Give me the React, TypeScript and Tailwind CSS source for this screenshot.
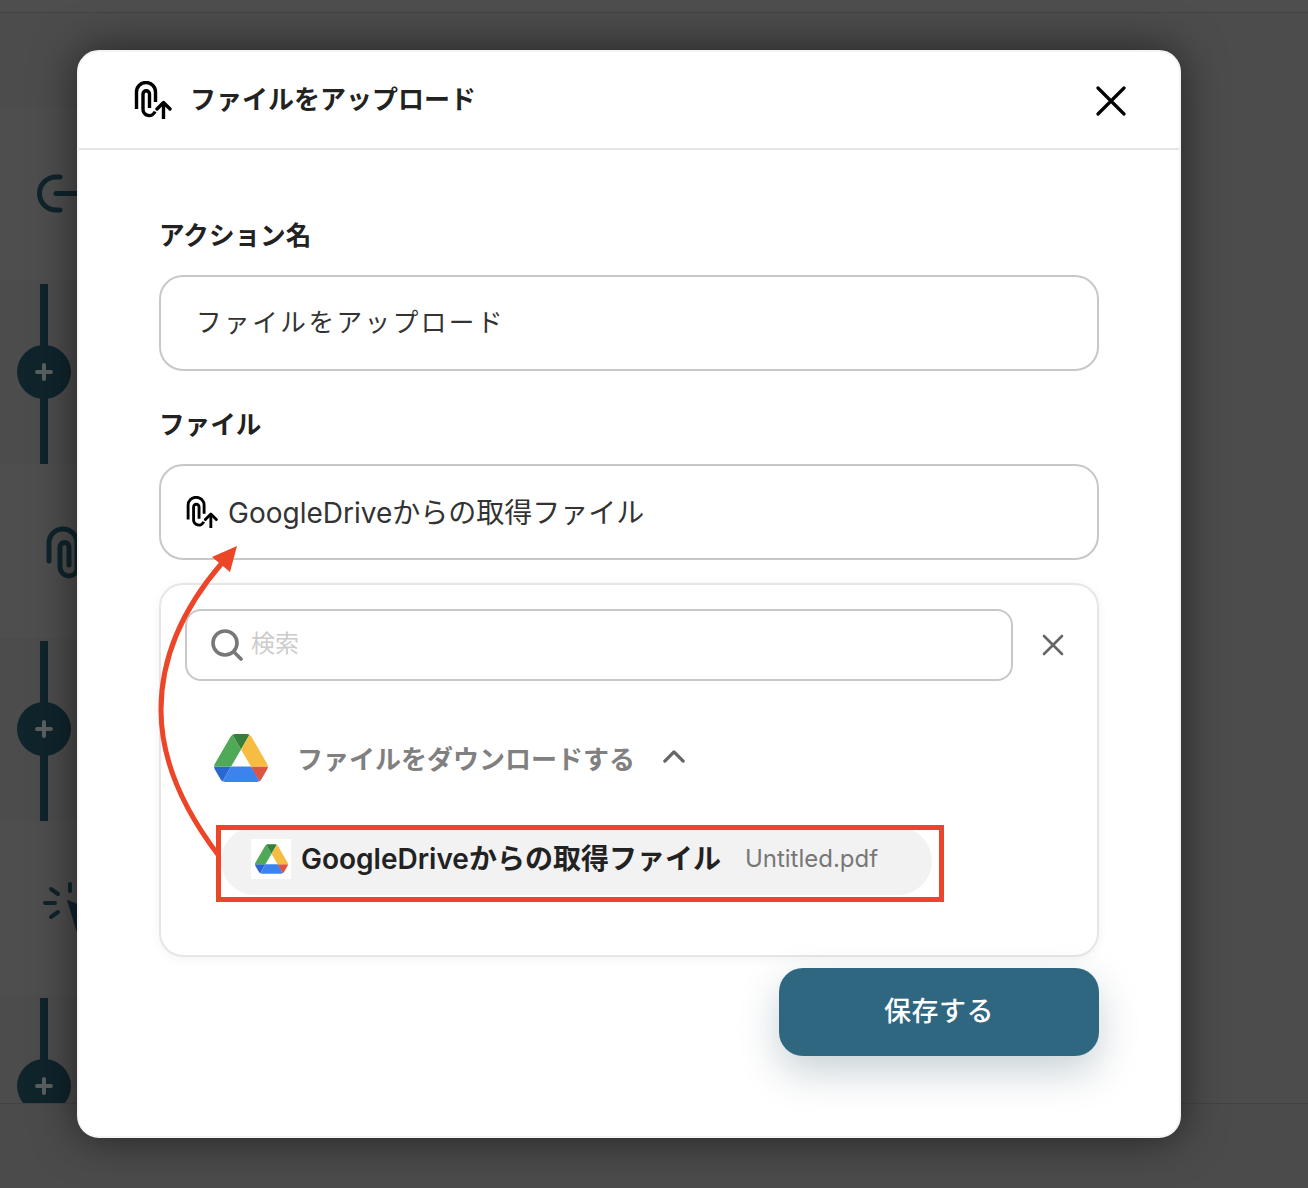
function ClipUpload({ className }: { className?: string }) {
  return (
    <svg viewBox="0 0 38 38" fill="none" stroke="currentColor" strokeWidth="3.4" strokeLinecap="round" strokeLinejoin="round" className={className}>
      <path strokeLinecap="butt" d="M2.5 28V11a9.5 9.5 0 0 1 19 0v10" />
      <path strokeLinecap="butt" d="M15.5 27V13a3.2 3.2 0 0 0-6.5 0v15a6.2 6.2 0 0 0 12 2.5" />
      <path strokeLinecap="butt" d="M29.5 38V23" />
      <path d="M23 28l6.5-6.5 6.5 6.5" />
    </svg>
  );
}

function DriveLogo({ className }: { className?: string }) {
  return (
    <svg viewBox="0 0 87.3 78" className={className}>
      <path d="m6.6 66.85 3.85 6.65c.8 1.4 1.95 2.5 3.3 3.3l13.75-23.8h-27.5c0 1.55.4 3.1 1.2 4.5z" fill="#2a66cf" />
      <path d="m43.65 25-13.75-23.8c-1.35.8-2.5 1.9-3.3 3.3l-25.4 44a9.06 9.06 0 0 0-1.2 4.5h27.5z" fill="#4fa957" />
      <path d="m73.55 76.8c1.35-.8 2.5-1.9 3.3-3.3l1.6-2.75 7.65-13.25c.8-1.4 1.2-2.95 1.2-4.5h-27.502l5.852 11.5z" fill="#dd5443" />
      <path d="m43.65 25 13.75-23.8c-1.35-.8-2.9-1.2-4.5-1.2h-18.5c-1.6 0-3.15.45-4.5 1.2z" fill="#34803a" />
      <path d="m59.8 53h-32.3l-13.75 23.8c1.35.8 2.9 1.2 4.5 1.2h50.8c1.6 0 3.15-.45 4.5-1.2z" fill="#3d83f0" />
      <path d="m73.4 26.5-12.7-22c-.8-1.4-1.95-2.5-3.3-3.3l-13.75 23.8 16.15 28h27.45c0-1.55-.4-3.1-1.2-4.5z" fill="#f5bd42" />
    </svg>
  );
}

function Connector() {
  return (
    <div className="relative h-[180px] w-[88px] shrink-0 flex justify-center items-center">
      <div className="absolute inset-y-0 w-2 bg-[#10242c]" />
      <div className="relative mb-[4px] w-[54px] h-[54px] rounded-full bg-[#10242c] flex items-center justify-center">
        <svg viewBox="0 0 20 20" className="w-5 h-5" stroke="#5a5f60" strokeWidth="4" strokeLinecap="round">
          <path d="M10 3v14M3 10h14" />
        </svg>
      </div>
    </div>
  );
}

function BackgroundCard({ children }: { children: React.ReactNode }) {
  return <div className="h-[174px] w-[300px] shrink-0 -ml-[20px] pl-[56px] rounded-[24px] bg-[#4e4e4e] flex items-center">{children}</div>;
}

export default function App() {
  return (
    <div className="relative h-[1188px] w-full overflow-hidden bg-[#4b4c4b] flex flex-col font-['Inter','Noto_Sans_CJK_JP',sans-serif]">
      {/* Page behind the dialog */}
      <div className="h-[13px] shrink-0 bg-[#4e4e4e] border-b border-[#434343]" />
      <div className="flex-1 min-h-0 overflow-hidden pt-[94px] flex flex-col">
        <BackgroundCard>
          <svg viewBox="0 0 44 40" fill="none" stroke="#10242c" strokeWidth="5" strokeLinecap="round" className="w-[44px] h-[40px]">
            <path d="M24 3h-4a16.5 16.5 0 0 0 0 33h4M20 19.5h24" />
          </svg>
        </BackgroundCard>
        <div className="h-[3px] shrink-0" />
        <Connector />
        <BackgroundCard>
          <svg viewBox="0 0 44 60" fill="none" stroke="#10242c" strokeWidth="5" strokeLinecap="round" className="w-[44px] h-[60px] ml-[10px] mt-[4px]">
            <path d="M3 38V20a14 14 0 0 1 28 0v28" />
            <path d="M23 42V24a4 4 0 0 0-9 0v20a9 9 0 0 0 17 4" />
          </svg>
        </BackgroundCard>
        <div className="h-[3px] shrink-0" />
        <Connector />
        <BackgroundCard>
          <svg viewBox="0 0 50 60" fill="none" stroke="#10242c" strokeWidth="4" strokeLinecap="round" className="w-[50px] h-[60px] ml-[7px] mt-[6px]">
            <path d="M27 3v7M2 22h10M8 8l7 5M8 36l7-5" />
            <path fill="#10242c" d="M27 22l20 8-8 5-5 10z" />
          </svg>
        </BackgroundCard>
        <div className="h-[3px] shrink-0" />
        <Connector />
      </div>
      <div className="h-[85px] shrink-0 bg-[#4b4b4b] border-t border-[#434343]" />

      {/* Dialog */}
      <div className="absolute left-[77px] top-[50px] w-[1104px] h-[1088px] rounded-[22px] bg-white border-2 border-[#f4f4f4] shadow-[0_0_44px_rgba(0,0,0,0.55)]">
        <div className="h-[98px] border-b-2 border-[#e5e5e5] flex items-center pl-[55px] pr-[53px]">
          <ClipUpload className="w-[38px] h-[38px] text-black" />
          <span className="ml-[18px] text-[26px] font-bold text-[#222] mb-[2px]">ファイルをアップロード</span>
          <svg viewBox="0 0 30 30" fill="none" stroke="#000" strokeWidth="3.2" strokeLinecap="round" className="ml-auto w-[30px] h-[30px] mt-[2px]">
            <path d="M2 2l26 26M28 2L2 28" />
          </svg>
        </div>

        <div className="px-[80px]">
          <div className="mt-[68px] h-[36px] leading-[36px] text-[25.6px] font-bold text-[#222]">アクション名</div>
          <div className="mt-[21px] h-[96px] rounded-[24px] border-2 border-[#c8c8c8] flex items-center pl-[35px] text-[25.6px] tracking-[2.5px] text-[#333]">
            ファイルをアップロード
          </div>

          <div className="mt-[36px] h-[36px] leading-[36px] text-[25.6px] font-bold text-[#222]">ファイル</div>
          <div className="mt-[21px] h-[96px] rounded-[24px] border-2 border-[#c8c8c8] flex items-center pl-[25px] text-[28px] text-[#333]">
            <ClipUpload className="w-[32px] h-[32px] text-black shrink-0" />
            <span className="ml-[10px] mt-[1px]">GoogleDriveからの取得ファイル</span>
          </div>

          <div className="mt-[23px] h-[374px] rounded-[24px] border-2 border-[#e6e6e6] bg-white px-[24px] pt-[24px] shadow-[0_2px_12px_rgba(0,0,0,0.05)]">
            <div className="flex items-center">
              <div className="w-[828px] h-[72px] rounded-[16px] border-2 border-[#c8c8c8] flex items-center pl-[24px]">
                <svg viewBox="0 0 32 32" fill="none" stroke="#777" strokeWidth="3.6" strokeLinecap="round" className="w-[32px] h-[32px]">
                  <circle cx="14" cy="14" r="12" />
                  <path d="M23 23l7 7" />
                </svg>
                <span className="ml-[8px] mb-[2px] text-[24px] text-[#ccc]">検索</span>
              </div>
              <svg viewBox="0 0 22 22" fill="none" stroke="#666" strokeWidth="2.6" strokeLinecap="round" className="ml-[29px] w-[22px] h-[22px]">
                <path d="M2 2l18 18M20 2L2 20" />
              </svg>
            </div>

            <div className="mt-[53px] ml-[29px] h-[48px] flex items-center">
              <DriveLogo className="w-[54px] h-[48px]" />
              <span className="ml-[29px] mt-[2px] text-[26px] font-bold text-[#808080]">ファイルをダウンロードする</span>
              <svg viewBox="0 0 24 14" fill="none" stroke="#666" strokeWidth="3.6" strokeLinecap="round" strokeLinejoin="round" className="ml-[28px] w-[22px] h-[13px] mb-[4px]">
                <path d="M2 12L12 2l10 10" />
              </svg>
            </div>

            <div className="relative mt-[45px] ml-[36px] w-[711px] h-[68px] rounded-full bg-[#f2f2f2] flex items-center pl-[30px]">
              <div className="w-[40px] h-[40px] mb-[4px] bg-white flex items-center justify-center shrink-0">
                <DriveLogo className="w-[33px] h-[30px]" />
              </div>
              <span className="ml-[10px] mb-[4px] text-[28px] font-semibold text-[#222] whitespace-nowrap">GoogleDriveからの取得ファイル</span>
              <span className="ml-[24px] mb-[4px] text-[24px] text-[#777] whitespace-nowrap">Untitled.pdf</span>
              {/* Red annotation box */}
              <div className="absolute -left-[5px] -top-[2px] w-[728px] h-[77px] border-[5px] border-[#ed4527]" />
            </div>
          </div>

          <div className="mt-[11px] ml-auto w-[320px] h-[88px] rounded-[24px] bg-[#306780] flex items-center justify-center text-[27px] font-medium tracking-[0.5px] text-white shadow-[0_16px_40px_rgba(0,50,70,0.22)]">
            <span className="mt-[1px]">保存する</span>
          </div>
        </div>
      </div>

      {/* Red annotation arrow */}
      <svg viewBox="0 0 1308 1188" fill="none" className="absolute inset-0 w-[1308px] h-[1188px] pointer-events-none">
        <path d="M219 856C180 805 161 755 161 710C161 650 190 600 222 563" stroke="#ed4527" strokeWidth="5" />
        <path d="M237 546L212 557L230 572Z" fill="#ed4527" />
      </svg>
    </div>
  );
}
